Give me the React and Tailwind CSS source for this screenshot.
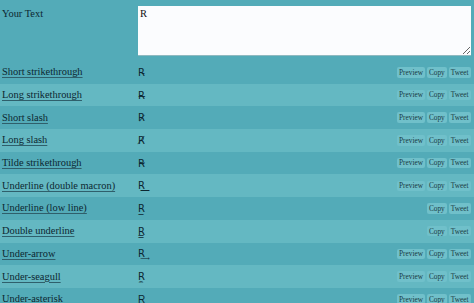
import React from "react";

const rows = [
  { label: "Short strikethrough", out: "R\u0335", preview: true },
  { label: "Long strikethrough", out: "R\u0336", preview: true },
  { label: "Short slash", out: "R\u0337", preview: true },
  { label: "Long slash", out: "R\u0338", preview: true },
  { label: "Tilde strikethrough", out: "R\u0334", preview: true },
  { label: "Underline (double macron)", out: "R\u035F", preview: true },
  { label: "Underline (low line)", out: "R\u0332", preview: false },
  { label: "Double underline", out: "R\u0333", preview: false },
  { label: "Under-arrow", out: "R\u0362", preview: true },
  { label: "Under-seagull", out: "R\u033C", preview: true },
  { label: "Under-asterisk", out: "R\u0359", preview: true },
];

function Btn({ children }) {
  return (
    <span className="inline-flex h-[10.5px] items-center rounded-[2px] bg-[#70c0ca] px-[2px] text-[7.3px] leading-none text-[#1a3a44]">
      {children}
    </span>
  );
}

export default function App() {
  return (
    <div
      className="h-[303px] w-[474px] overflow-hidden bg-[#53abb8] text-[#0c2731]"
      style={{ fontFamily: '"Liberation Serif", "Times New Roman", serif' }}
    >
      <div className="flex h-[61px] pt-[6px]">
        <div className="w-[138px] pl-[2px] pt-[2px] text-[10.4px] leading-[12px]">Your Text</div>
        <textarea
          defaultValue="R"
          autoFocus
          className="h-[50px] w-[333px] resize border-b border-[#8fb9c0] bg-[#fbfcfe] px-[2px] pt-[1px] text-[10.5px] leading-[13px] text-[#111] caret-[#333] outline-none"
          style={{ fontFamily: '"Liberation Serif", "Times New Roman", serif' }}
        />
      </div>
      {rows.map((r, i) => (
        <div
          key={r.label}
          className={`flex h-[22.7px] items-center pr-[3.5px] ${i % 2 === 0 ? "bg-[#53abb8]" : "bg-[#64b8c2]"}`}
        >
          <div className="w-[138px] pl-[2px] text-[10.4px] leading-[12px]">
            <span className="underline decoration-[#2f5f6b] underline-offset-[1.5px]">{r.label}</span>
          </div>
          <div
            className="flex-1 text-[10px] text-[#0c2731]"
            style={{ fontFamily: '"DejaVu Sans", "Liberation Sans", sans-serif' }}
          >
            {r.out}
          </div>
          <div className="flex gap-[2px]">
            {r.preview && <Btn>Preview</Btn>}
            <Btn>Copy</Btn>
            <Btn>Tweet</Btn>
          </div>
        </div>
      ))}
    </div>
  );
}
